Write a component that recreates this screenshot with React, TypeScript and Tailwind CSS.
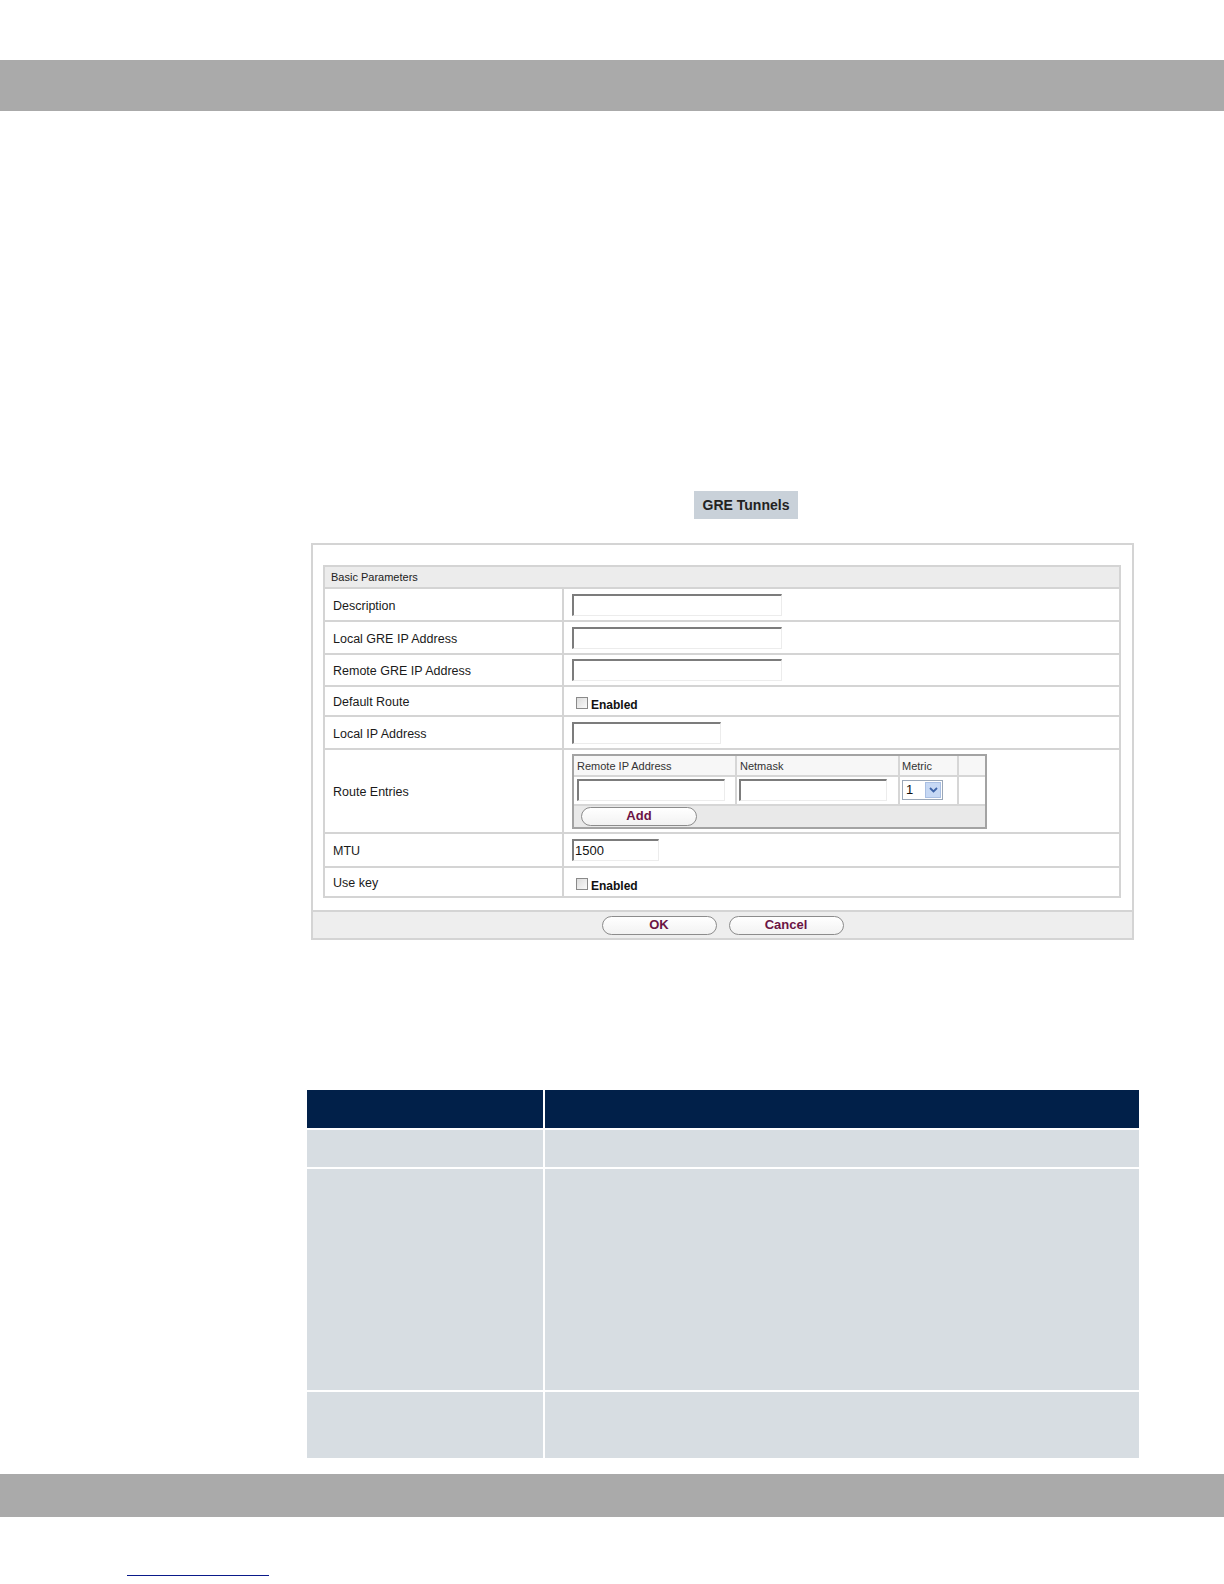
import React from 'react'

const font = "font-['Liberation_Sans',Arial,sans-serif]"

function TextInput({ w, value }: { w: string; value?: string }) {
  return (
    <div
      className={`${w} h-[22px] bg-white border-t-2 border-l-2 border-r border-b border-t-[#7c7c7c] border-l-[#7c7c7c] border-r-[#ececec] border-b-[#ececec] text-[13px] leading-[19px] pl-[1px] text-[#111]`}
    >
      {value}
    </div>
  )
}

function Checkbox({ label }: { label: string }) {
  return (
    <div className="flex items-end gap-[3px] pt-[3px] ml-[4px]">
      <div className="w-[12px] h-[12px] border border-[#8a8a8a] bg-gradient-to-br from-[#dcdcdc] to-[#fafafa]" />
      <span className="text-[12px] font-bold leading-[12px] text-[#111] translate-y-[2px]">{label}</span>
    </div>
  )
}

function Pill({ label, w }: { label: string; w: string }) {
  return (
    <button
      type="button"
      className={`${w} h-[19px] rounded-full border border-[#8c8c8c] bg-gradient-to-b from-white to-[#f2f2f2] text-[13px] font-bold leading-[16px] text-[#6b1444]`}
    >
      {label}
    </button>
  )
}

function Row({ label, h, children }: { label: string; h: string; children: React.ReactNode }) {
  return (
    <>
      <div className={`${h} bg-white flex items-center pl-[8px] pt-[3px] text-[12.5px] text-[#1a1a1a]`}>{label}</div>
      <div className={`${h} bg-white flex items-center pl-[8px]`}>{children}</div>
    </>
  )
}

function RouteEntries() {
  return (
    <div className="w-[415px] border-2 border-[#a3a3a3] bg-[#d6d6d6] flex flex-col gap-[2px]">
      <div className="grid grid-cols-[161px_161px_57px_26px] gap-[2px]">
        <div className="h-[19px] bg-[#f7f7f7] pl-[3px] text-[11px] leading-[20px] text-[#333]">Remote IP Address</div>
        <div className="h-[19px] bg-[#f7f7f7] pl-[3px] text-[11px] leading-[20px] text-[#333]">Netmask</div>
        <div className="h-[19px] bg-[#f7f7f7] pl-[2px] text-[11px] leading-[20px] text-[#333]">Metric</div>
        <div className="h-[19px] bg-[#f7f7f7]" />
        <div className="h-[27px] bg-white flex items-center pl-[3px]">
          <TextInput w="w-[148px]" />
        </div>
        <div className="h-[27px] bg-white flex items-center pl-[2px]">
          <TextInput w="w-[148px]" />
        </div>
        <div className="h-[27px] bg-white flex items-center pl-[2px]">
          <div className="w-[41px] h-[20px] border border-[#9aa7b8] bg-white flex items-center justify-between pl-[3px] pr-[1px]">
            <span className="text-[13px] leading-[16px] text-[#111]">1</span>
            <div className="w-[16px] h-[16px] bg-[#c6d8f4] border border-[#a9bfe3] flex items-center justify-center">
              <svg width="9" height="6" viewBox="0 0 9 6">
                <path d="M1 1 L4.5 4.5 L8 1" fill="none" stroke="#3d63a8" strokeWidth="1.8" />
              </svg>
            </div>
          </div>
        </div>
        <div className="h-[27px] bg-white" />
      </div>
      <div className="h-[21px] bg-[#e9e9e9] flex items-center pl-[7px]">
        <Pill label="Add" w="w-[116px]" />
      </div>
    </div>
  )
}

export default function App() {
  return (
    <div className={`${font} w-[1224px] h-[1584px] bg-white flex flex-col`}>
      <div className="h-[60px]" />
      <div className="h-[51px] bg-[#aaaaaa]" />
      <div className="h-[380px]" />

      {/* tab */}
      <div className="h-[28px] flex">
        <div className="ml-[694px] w-[104px] bg-[#c9d1d9] flex items-center justify-center text-[14px] font-bold text-[#222]">
          GRE Tunnels
        </div>
      </div>
      <div className="h-[24px]" />

      {/* form frame */}
      <div className="ml-[311px] w-[823px] h-[397px] border-2 border-[#d4d4d4] flex flex-col">
        <div className="pt-[20px] pl-[10px]">
          <div className="w-[798px] border-2 border-[#d4d4d4] bg-[#d4d4d4] grid grid-cols-[237px_1fr] gap-[2px]">
            <div className="col-span-2 h-[20px] bg-[#ececec] pl-[6px] text-[11px] leading-[21px] text-[#222]">
              Basic Parameters
            </div>
            <Row label="Description" h="h-[31px]">
              <TextInput w="w-[210px]" />
            </Row>
            <Row label="Local GRE IP Address" h="h-[31px]">
              <TextInput w="w-[210px]" />
            </Row>
            <Row label="Remote GRE IP Address" h="h-[30px]">
              <TextInput w="w-[210px]" />
            </Row>
            <Row label="Default Route" h="h-[28px]">
              <Checkbox label="Enabled" />
            </Row>
            <Row label="Local IP Address" h="h-[31px]">
              <TextInput w="w-[149px]" />
            </Row>
            <Row label="Route Entries" h="h-[82px]">
              <RouteEntries />
            </Row>
            <Row label="MTU" h="h-[32px]">
              <TextInput w="w-[87px]" value="1500" />
            </Row>
            <Row label="Use key" h="h-[28px]">
              <Checkbox label="Enabled" />
            </Row>
          </div>
        </div>
        <div className="flex-1" />
        <div className="h-[28px] border-t-2 border-[#d4d4d4] bg-[#eeeeee] flex items-center justify-center gap-[12px]">
          <Pill label="OK" w="w-[115px]" />
          <Pill label="Cancel" w="w-[115px]" />
        </div>
      </div>

      <div className="h-[150px]" />

      {/* parameter table */}
      <div className="ml-[307px] w-[832px] grid grid-cols-[236px_1fr] gap-[2px] bg-white">
        <div className="h-[38px] bg-[#012049]" />
        <div className="h-[38px] bg-[#012049]" />
        <div className="h-[37px] bg-[#d7dde2]" />
        <div className="h-[37px] bg-[#d7dde2]" />
        <div className="h-[221px] bg-[#d7dde2]" />
        <div className="h-[221px] bg-[#d7dde2]" />
        <div className="h-[66px] bg-[#d7dde2]" />
        <div className="h-[66px] bg-[#d7dde2]" />
      </div>

      <div className="h-[16px]" />
      <div className="h-[43px] bg-[#aaaaaa]" />
      <div className="h-[58px]" />
      <div className="ml-[127px] w-[142px] h-[1px] bg-[#0a1a8a]" />
    </div>
  )
}
